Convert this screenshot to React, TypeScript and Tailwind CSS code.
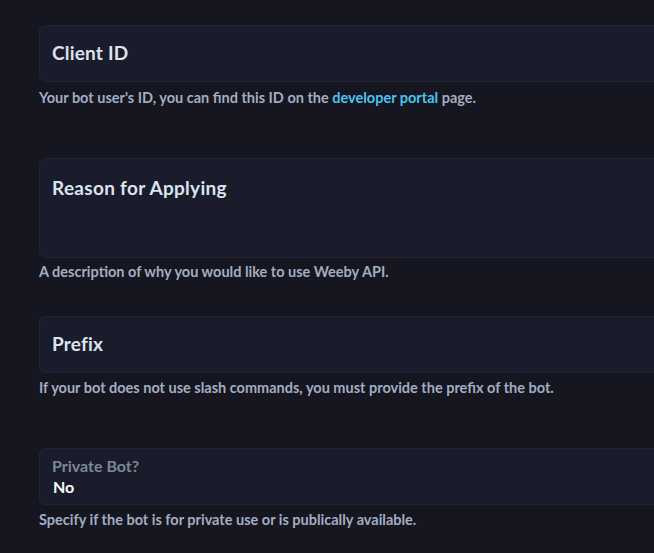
import React from "react"

const font = { fontFamily: "Lato, 'Open Sans', sans-serif" }

function Help({ children, className = "" }: { children: React.ReactNode; className?: string }) {
  return <p className={`text-[14.5px] leading-[20px] font-bold text-[#a3adc2] whitespace-nowrap ${className}`}>{children}</p>
}

export default function App() {
  return (
    <div className="w-[654px] h-[553px] overflow-hidden bg-[#15161f]" style={font}>
      <div className="pl-[39px] pt-[25px] w-[760px]">
        {/* Client ID */}
        <div className="h-[57px] flex items-center px-[12px] rounded-md bg-[#1a1c2b] border border-[#212333]">
          <span className="text-[19px] font-bold tracking-[0.2px] text-[#dbe3ee]">Client ID</span>
        </div>
        <Help className="mt-[6px]">
          Your bot user's ID, you can find this ID on the{" "}
          <span className="text-[#4cc3f0]">developer portal</span> page.
        </Help>

        {/* Reason */}
        <div className="mt-[50px] h-[100px] px-[12px] pt-[17px] rounded-md bg-[#1a1c2b] border border-[#212333]">
          <span className="block leading-[24px] text-[19px] font-bold tracking-[0.3px] text-[#dbe3ee]">Reason for Applying</span>
        </div>
        <Help className="mt-[4px]">A description of why you would like to use Weeby API.</Help>

        {/* Prefix */}
        <div className="mt-[34px] h-[57px] flex items-center px-[12px] rounded-md bg-[#1a1c2b] border border-[#212333]">
          <span className="text-[19px] font-bold tracking-[0.2px] text-[#dbe3ee]">Prefix</span>
        </div>
        <Help className="mt-[5px]">If your bot does not use slash commands, you must provide the prefix of the bot.</Help>

        {/* Private bot */}
        <div className="mt-[50px] h-[57px] px-[12px] pt-[8px] rounded-md bg-[#1a1c2b] border border-[#212333]">
          <span className="block leading-[18px] text-[16px] font-bold text-[#7d8695]">Private Bot?</span>
          <span className="block leading-[24px] text-[16px] font-bold text-white pl-px">No</span>
        </div>
        <Help className="mt-[5px]">Specify if the bot is for private use or is publically available.</Help>
      </div>
    </div>
  )
}
